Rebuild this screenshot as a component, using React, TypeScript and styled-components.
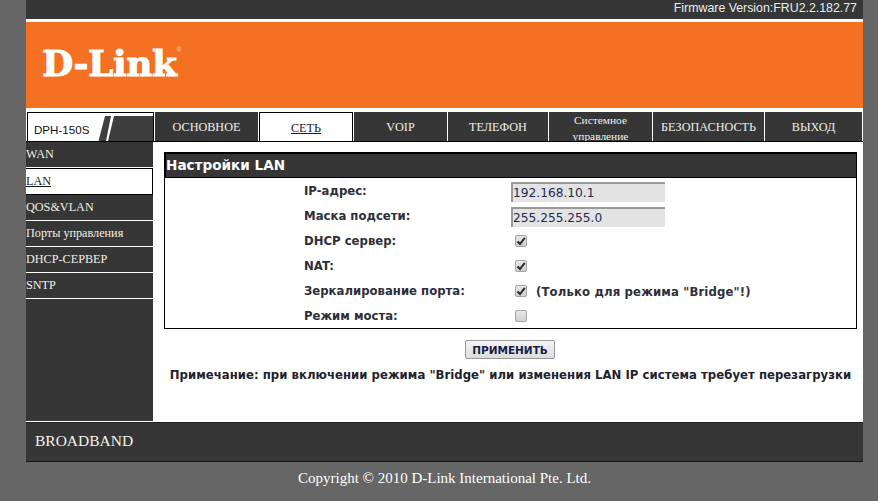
import styled, { createGlobalStyle } from 'styled-components';

const GlobalStyle = createGlobalStyle`
  html, body {
    margin: 0;
    padding: 0;
    background: #666666;
  }
  * {
    box-sizing: border-box;
  }
`;

const Page = styled.div`
  width: 878px;
  height: 501px;
  overflow: hidden;
  padding: 0 15px 0 26px;
`;

const TopBar = styled.div`
  height: 19px;
  background: #363636;
  color: #e8f0f4;
  font: 12.35px/17px 'Liberation Sans', Arial, sans-serif;
  text-align: right;
  padding-right: 6px;
`;

const Banner = styled.div`
  height: 93px;
  background: #f47023;
  border-top: 3px solid #fff;
  border-bottom: 4px solid #fff;
  padding: 19px 0 0 16px;
`;

const Logo = styled.div`
  color: #fff;
  font: bold 36px/44px 'DejaVu Serif', 'Liberation Serif', serif;
  letter-spacing: -0.4px;
  -webkit-text-stroke: 1px #fff;
  display: flex;
  align-items: flex-start;
`;

const LogoMark = styled.span`
  font: 7px/8px 'Liberation Sans', sans-serif;
  letter-spacing: 0;
  -webkit-text-stroke: 0;
  margin: 5px 0 0 0;
  color: #f8d5bd;
`;

const NavRow = styled.div`
  display: grid;
  grid-template-columns: 129px 104px 95px 94px 101px 104px 112px 98px;
  height: 30px;
  background: #fff;
  border-bottom: 1px solid #000;
`;

const ModelCell = styled.div`
  border: 1px solid #000;
  border-bottom: 0;
  margin-left: 1px;
  margin-right: 1px;
  background: #fff;
  display: flex;
  align-items: flex-end;
  justify-content: space-between;
  overflow: hidden;
`;

const ModelName = styled.span`
  font: 11.6px/20px 'Liberation Sans', Arial, sans-serif;
  color: #111;
  padding: 0 0 1px 6px;
`;

const NavTab = styled.div<{ $active?: boolean; $small?: boolean }>`
  background: ${(p) => (p.$active ? '#fff' : '#363636')};
  color: ${(p) => (p.$active ? '#1a1a1a' : '#f0f0e8')};
  border: ${(p) => (p.$active ? '1px solid #000' : '0')};
  border-bottom: 0;
  margin-right: 1px;
  font: ${(p) => (p.$small ? '11.4px/16px' : '12.2px/15px')} 'Liberation Serif', 'Times New Roman', serif;
  text-decoration: ${(p) => (p.$active ? 'underline' : 'none')};
  text-align: center;
  display: flex;
  align-items: center;
  justify-content: center;
  padding-top: 2px;
  overflow: hidden;
`;

const MainRow = styled.div`
  display: flex;
  height: 280px;
  background: #fff;
`;

const Sidebar = styled.div`
  width: 127px;
  background: #363636;
  border-bottom: 1px solid #fff;
  flex: none;
`;

const SideItem = styled.div<{ $active?: boolean }>`
  height: ${(p) => (p.$active ? '27px' : '26px')};
  background: ${(p) => (p.$active ? '#fff' : '#363636')};
  color: ${(p) => (p.$active ? '#1a1a1a' : '#f0f0e8')};
  border: ${(p) => (p.$active ? '1px solid #000' : '0')};
  border-left: 0;
  border-bottom: ${(p) => (p.$active ? '1px solid #000' : '1px solid #fff')};
  text-decoration: ${(p) => (p.$active ? 'underline' : 'none')};
  font: 12.2px/25px 'Liberation Serif', 'Times New Roman', serif;
`;

const Content = styled.div`
  flex: 1;
  padding: 10px 6px 0 11px;
`;

const Panel = styled.div`
  border: 1px solid #000;
  border-top: 0;
  height: 177px;
`;

const PanelTitle = styled.div`
  height: 26px;
  margin: 0 -1px;
  background: #363636;
  border: 2px solid #000;
  border-bottom: 1px solid #000;
  border-right-width: 1px;
  color: #fff;
  font: bold 13.6px/23px 'DejaVu Sans', Verdana, sans-serif;
`;

const FormBody = styled.div`
  display: grid;
  grid-auto-rows: 25px;
  padding-top: 1px;
`;

const FormRow = styled.div`
  display: grid;
  grid-template-columns: 346px 1fr;
  align-items: center;
  font: bold 11.7px/14px 'DejaVu Sans', Verdana, sans-serif;
  color: #2e2e38;
`;

const Label = styled.div`
  padding: 0 0 1px 139px;
`;

const Value = styled.div`
  display: flex;
  align-items: center;
`;

const TextField = styled.input`
  width: 154px;
  height: 20px;
  background: #e3e3e3;
  border: 0;
  border-top: 2px solid #999;
  border-left: 2px solid #999;
  padding: 0;
  color: #1c2c55;
  font: 12.2px 'DejaVu Sans', Verdana, sans-serif;
  outline: none;
`;

const CheckBox = styled.span`
  width: 12px;
  height: 12px;
  margin: 0 0 1px 4px;
  flex: none;
  display: flex;
  align-items: center;
  justify-content: center;
  background: linear-gradient(#e8e8e8, #cfcfcf);
  border: 1px solid #a4a4a4;
  border-radius: 2px;
`;

const Hint = styled.span`
  margin-left: 9px;
  letter-spacing: 0.14px;
`;

const Actions = styled.div`
  display: flex;
  justify-content: center;
  padding: 11px 1px 0 0;
`;

const ApplyButton = styled.button`
  width: 90px;
  height: 19px;
  padding: 0;
  background: linear-gradient(#f4f4f4, #dcdcdc);
  border: 1px solid #9a9a9a;
  border-radius: 2px;
  color: #12204a;
  font: bold 10.5px 'DejaVu Sans', Verdana, sans-serif;
`;

const Note = styled.div`
  margin-top: 7px;
  text-align: center;
  color: #22222c;
  font: bold 11.7px/18px 'DejaVu Sans', Verdana, sans-serif;
  letter-spacing: 0.03px;
  white-space: nowrap;
`;

const BottomBar = styled.div`
  height: 40px;
  background: #363636;
  border-top: 1px solid #222;
  border-bottom: 1px solid #111;
  color: #f4f4ec;
  font: 15.5px/36px 'Liberation Serif', 'Times New Roman', serif;
  padding-left: 9px;
`;

const Copyright = styled.div`
  color: #fff;
  font: 15px/18px 'Liberation Serif', 'Times New Roman', serif;
  text-align: center;
  margin-top: 7px;
`;

const navItems = ['ОСНОВНОЕ', 'СЕТЬ', 'VOIP', 'ТЕЛЕФОН', 'Системное управление', 'БЕЗОПАСНОСТЬ', 'ВЫХОД'];
const sideItems = ['WAN', 'LAN', 'QOS&VLAN', 'Порты управления', 'DHCP-СЕРВЕР', 'SNTP'];

const ModelStripes = () => (
  <svg width="56" height="28" viewBox="0 0 56 28">
    <polygon points="11,28 17,3 56,3 56,28" fill="#3e3e3e" />
    <polygon points="1.5,28 8,3 14,3 9,28" fill="#404040" />
  </svg>
);

const Tick = () => (
  <svg width="10" height="10" viewBox="0 0 10 10">
    <path d="M1.5 5.5 L4 8 L8.8 1.8" fill="none" stroke="#2a2a2a" strokeWidth="2" />
  </svg>
);

export default function App() {
  return (
    <>
      <GlobalStyle />
      <Page>
        <TopBar>Firmware Version:FRU2.2.182.77</TopBar>
        <Banner>
          <Logo>
            D-Link
            <LogoMark>®</LogoMark>
          </Logo>
        </Banner>
        <NavRow>
          <ModelCell>
            <ModelName>DPH-150S</ModelName>
            <ModelStripes />
          </ModelCell>
          {navItems.map((item) => (
            <NavTab key={item} $active={item === 'СЕТЬ'} $small={item === 'Системное управление'}>
              {item}
            </NavTab>
          ))}
        </NavRow>
        <MainRow>
          <Sidebar>
            {sideItems.map((item) => (
              <SideItem key={item} $active={item === 'LAN'}>
                {item}
              </SideItem>
            ))}
          </Sidebar>
          <Content>
            <Panel>
              <PanelTitle>Настройки LAN</PanelTitle>
              <FormBody>
                <FormRow>
                  <Label>IP-адрес:</Label>
                  <Value>
                    <TextField defaultValue="192.168.10.1" />
                  </Value>
                </FormRow>
                <FormRow>
                  <Label>Маска подсети:</Label>
                  <Value>
                    <TextField defaultValue="255.255.255.0" />
                  </Value>
                </FormRow>
                <FormRow>
                  <Label>DHCP сервер:</Label>
                  <Value>
                    <CheckBox>
                      <Tick />
                    </CheckBox>
                  </Value>
                </FormRow>
                <FormRow>
                  <Label>NAT:</Label>
                  <Value>
                    <CheckBox>
                      <Tick />
                    </CheckBox>
                  </Value>
                </FormRow>
                <FormRow>
                  <Label>Зеркалирование порта:</Label>
                  <Value>
                    <CheckBox>
                      <Tick />
                    </CheckBox>
                    <Hint>(Только для режима "Bridge"!)</Hint>
                  </Value>
                </FormRow>
                <FormRow>
                  <Label>Режим моста:</Label>
                  <Value>
                    <CheckBox />
                  </Value>
                </FormRow>
              </FormBody>
            </Panel>
            <Actions>
              <ApplyButton>ПРИМЕНИТЬ</ApplyButton>
            </Actions>
            <Note>Примечание: при включении режима "Bridge" или изменения LAN IP система требует перезагрузки</Note>
          </Content>
        </MainRow>
        <BottomBar>BROADBAND</BottomBar>
        <Copyright>Copyright © 2010 D-Link International Pte. Ltd.</Copyright>
      </Page>
    </>
  );
}
